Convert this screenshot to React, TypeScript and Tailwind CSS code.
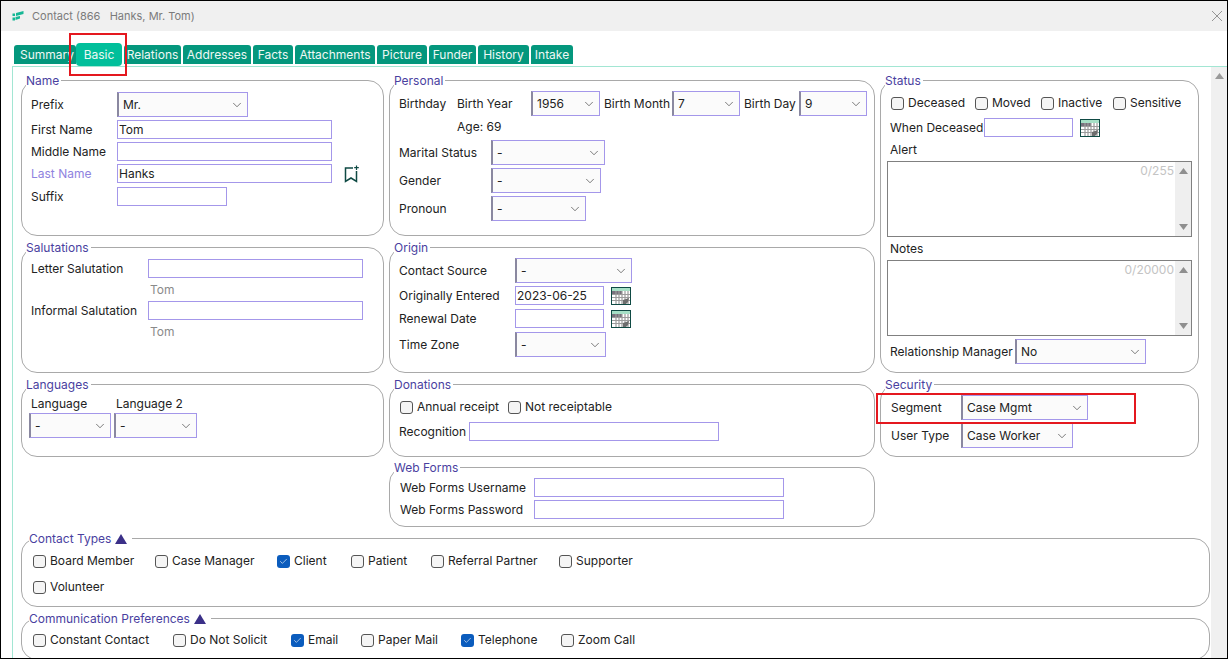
import { ReactNode } from "react";
import { Check, ChevronDown } from "lucide-react";

function Group({ title, arrow, className, children }: { title: string; arrow?: boolean; className?: string; children: ReactNode }) {
  return (
    <fieldset className={`min-w-0 rounded-[16px] border border-[#a9a9a9] ${className ?? ""}`}>
      <legend className={`flex h-4 items-center pr-[2px] pt-[1px] leading-4 text-[#4a3f9f] ${arrow ? "ml-[7px] pr-[5px]" : "ml-[4px]"}`}>
        {title}
        {arrow && (
          <svg width="12" height="10" viewBox="0 0 12 10" className="ml-[4px]">
            <path d="M6 0 L12 10 L0 10 Z" fill="#3b3088" />
          </svg>
        )}
      </legend>
      {children}
    </fieldset>
  );
}

function Select({ value, w }: { value: string; w: string }) {
  return (
    <div className={`flex h-[25px] shrink-0 items-center justify-between border border-l-2 border-[#a497ea] border-l-[#8a88a0] bg-[#fbfbfb] pl-[4px] pr-[3px] ${w}`}>
      <span>{value}</span>
      <ChevronDown size={14} strokeWidth={1.1} className="text-[#333]" />
    </div>
  );
}

function Input({ value, w }: { value?: string; w: string }) {
  return (
    <div className={`flex h-[19px] shrink-0 items-center border border-[#a497ea] bg-white pl-[1px] ${w}`}>
      {value}
    </div>
  );
}

function Box({ label, checked, w }: { label: string; checked?: boolean; w: string }) {
  return (
    <div className={`flex h-4 shrink-0 items-center gap-[4px] ${w}`}>
      {checked ? (
        <span className="flex h-[13px] w-[13px] items-center justify-center rounded-[3px] bg-[#0b5cbd]">
          <Check size={9} strokeWidth={1.6} className="text-white" />
        </span>
      ) : (
        <span className="h-[13px] w-[13px] rounded-[3px] border border-[#555] bg-[#f5f5f5]" />
      )}
      <span>{label}</span>
    </div>
  );
}

function CalendarIcon({ className }: { className?: string }) {
  return (
    <svg width="20" height="18" viewBox="0 0 20 18" className={`shrink-0 ${className ?? ""}`}>
      <rect x="0.5" y="0.5" width="19" height="17" fill="#fff" stroke="#0f4a44" />
      <rect x="1" y="1" width="18" height="3" fill="#a6e0c6" />
      <rect x="1" y="4" width="10" height="3" fill="#77717c" />
      <path d="M5 4V17M8 4V17M11 4V17M14 4V17M17 4V17M1 7.5H19M1 10.5H19M1 13.5H19" stroke="#9c9c9c" strokeWidth="1.2" />
      <path d="M12 17 L12 13 L18 11 L17 15 L15 17 Z" fill="#6e6e6e" />
    </svg>
  );
}

function Bookmark() {
  return (
    <svg width="16" height="18" viewBox="0 0 16 18" fill="none" stroke="#0f4a44" strokeWidth="1.5" className="ml-[12px] shrink-0">
      <path d="M9 3H1.5V16.5L7 13L12.5 16.5V6" />
      <path d="M12.5 0.5V5M10.2 2.7H14.8" strokeWidth="1.2" />
    </svg>
  );
}

function TextArea({ count }: { count: string }) {
  return (
    <div className="relative ml-[6px] mt-[3px] flex h-[76px] w-[305px] justify-end border border-[#808080] bg-white">
      <span className="absolute right-[17px] top-[1px] text-[#c4c4c4]">{count}</span>
      <div className="flex w-[16px] flex-col items-center justify-between bg-[#efefef] py-[6px]">
        <svg width="9" height="6" viewBox="0 0 9 6"><path d="M4.5 0L9 6H0Z" fill="#8f8f8f" /></svg>
        <svg width="9" height="6" viewBox="0 0 9 6"><path d="M4.5 6L9 0H0Z" fill="#8f8f8f" /></svg>
      </div>
    </div>
  );
}

const tabs = [
  { name: "Relations", w: "w-[57px]" },
  { name: "Addresses", w: "w-[68px]" },
  { name: "Facts", w: "w-[40px]" },
  { name: "Attachments", w: "w-[80px]" },
  { name: "Picture", w: "w-[50px]" },
  { name: "Funder", w: "w-[47px]" },
  { name: "History", w: "w-[51px]" },
  { name: "Intake", w: "w-[42px]" },
];

export default function App() {
  return (
    <div className="relative flex h-[659px] w-[1228px] flex-col overflow-hidden whitespace-nowrap border border-black bg-white font-['Inter',sans-serif] text-[12px] leading-4 text-[#222]">
      {/* title bar */}
      <div className="flex h-[30px] shrink-0 items-center justify-between bg-[#f0f0f0] pl-[11px] pr-[4px] text-[11px] text-[#7b7b7b]">
        <div className="flex items-center gap-[8px]">
          <svg width="12" height="10" viewBox="0 0 12 10" fill="#16b795">
            <path d="M4 2L11.5 0V3L4 5Z" />
            <path d="M0.5 2.5H3V5H0.5Z" />
            <path d="M3.5 6L8 5V7.5L3.5 9Z" />
            <path d="M0.5 6.5H3V9.5H0.5Z" />
          </svg>
          <span className="whitespace-pre">Contact (866   Hanks, Mr. Tom)</span>
        </div>
        <svg width="12" height="12" viewBox="0 0 12 12" stroke="#8a8a8a" strokeWidth="0.9">
          <path d="M1 1L11 11M11 1L1 11" />
        </svg>
      </div>

      {/* tabs */}
      <div className="mt-[12px] flex h-[23px] shrink-0 items-start pl-[13px] text-[#eef8f5]">
        <div className="mt-[2px] h-[19px] w-[62px] rounded-t-[3px] bg-[#04977d] pl-[6px] leading-[19px]">Summary</div>
        <div className="h-[23px] w-[46px] rounded-[4px] bg-[#01bf9b] text-center leading-[23px]">Basic</div>
        {tabs.map((t) => (
          <div key={t.name} className={`ml-[2px] mt-[2px] h-[19px] rounded-t-[3px] bg-[#04977d] text-center leading-[19px] ${t.w}`}>
            {t.name}
          </div>
        ))}
      </div>

      {/* panel */}
      <div className="ml-[11px] flex min-h-0 flex-1 border-l border-t border-[#a2e6d3]">
        <div className="flex w-[1197px] shrink-0 flex-col pl-[8px] pt-[5px]">
          <div className="grid grid-cols-[363px_486px_319px] grid-rows-[164px_134px_81px_67px] gap-x-[5px] gap-y-[3px]">
            <Group title="Name">
              <div className="flex flex-col pl-[9px] pt-[4px]">
                <div className="flex items-center">
                  <span className="w-[86px]">Prefix</span>
                  <Select value="Mr." w="w-[131px]" />
                </div>
                <div className="mt-[3px] flex items-center">
                  <span className="w-[86px]">First Name</span>
                  <Input value="Tom" w="w-[215px]" />
                </div>
                <div className="mt-[3px] flex items-center">
                  <span className="w-[86px]">Middle Name</span>
                  <Input w="w-[215px]" />
                </div>
                <div className="mt-[3px] flex items-center">
                  <span className="w-[86px] text-[#8f83e0]">Last Name</span>
                  <Input value="Hanks" w="w-[215px]" />
                  <Bookmark />
                </div>
                <div className="mt-[4px] flex items-center">
                  <span className="w-[86px]">Suffix</span>
                  <Input w="w-[110px]" />
                </div>
              </div>
            </Group>

            <Group title="Personal">
              <div className="flex flex-col pl-[9px] pt-[3px]">
                <div className="flex items-center">
                  <span className="w-[58px]">Birthday</span>
                  <span className="w-[74px]">Birth Year</span>
                  <Select value="1956" w="w-[69px]" />
                  <span className="ml-[4px] w-[68px]">Birth Month</span>
                  <Select value="7" w="w-[68px]" />
                  <span className="ml-[4px] w-[55px]">Birth Day</span>
                  <Select value="9" w="w-[68px]" />
                </div>
                <div className="ml-[58px] mt-[3px]">Age: 69</div>
                <div className="mt-[5px] flex items-center">
                  <span className="w-[92px]">Marital Status</span>
                  <Select value="-" w="w-[114px]" />
                </div>
                <div className="mt-[3px] flex items-center">
                  <span className="w-[92px]">Gender</span>
                  <Select value="-" w="w-[110px]" />
                </div>
                <div className="mt-[3px] flex items-center">
                  <span className="w-[92px]">Pronoun</span>
                  <Select value="-" w="w-[95px]" />
                </div>
              </div>
            </Group>

            <Group title="Status" className="row-span-2">
              <div className="flex flex-col pt-[7px]">
                <div className="flex pl-[10px]">
                  <Box label="Deceased" w="w-[84px]" />
                  <Box label="Moved" w="w-[66px]" />
                  <Box label="Inactive" w="w-[72px]" />
                  <Box label="Sensitive" w="w-[80px]" />
                </div>
                <div className="mt-[7px] flex items-center pl-[9px]">
                  <span className="w-[94px]">When Deceased</span>
                  <Input w="w-[89px]" />
                  <CalendarIcon className="ml-[7px]" />
                </div>
                <div className="mt-[5px] pl-[9px]">Alert</div>
                <TextArea count="0/255" />
                <div className="mt-[4px] pl-[9px]">Notes</div>
                <TextArea count="0/20000" />
                <div className="mt-[3px] flex items-center pl-[9px]">
                  <span className="w-[125px]">Relationship Manager</span>
                  <Select value="No" w="w-[131px]" />
                </div>
              </div>
            </Group>

            <Group title="Salutations">
              <div className="flex flex-col pl-[9px] pt-[4px]">
                <div className="flex items-center">
                  <span className="w-[117px]">Letter Salutation</span>
                  <Input w="w-[215px]" />
                </div>
                <div className="ml-[119px] mt-[4px] text-[#8a8a8a]">Tom</div>
                <div className="mt-[3px] flex items-center">
                  <span className="w-[117px]">Informal Salutation</span>
                  <Input w="w-[215px]" />
                </div>
                <div className="ml-[119px] mt-[4px] text-[#8a8a8a]">Tom</div>
              </div>
            </Group>

            <Group title="Origin">
              <div className="flex flex-col pl-[9px] pt-[3px]">
                <div className="flex items-center">
                  <span className="w-[116px]">Contact Source</span>
                  <Select value="-" w="w-[117px]" />
                </div>
                <div className="mt-[3px] flex items-center">
                  <span className="w-[116px]">Originally Entered</span>
                  <Input value="2023-06-25" w="w-[89px]" />
                  <CalendarIcon className="ml-[7px]" />
                </div>
                <div className="mt-[4px] flex items-center">
                  <span className="w-[116px]">Renewal Date</span>
                  <Input w="w-[89px]" />
                  <CalendarIcon className="ml-[7px]" />
                </div>
                <div className="mt-[4px] flex items-center">
                  <span className="w-[116px]">Time Zone</span>
                  <Select value="-" w="w-[91px]" />
                </div>
              </div>
            </Group>

            <Group title="Languages">
              <div className="grid grid-cols-[85px_85px] pl-[7px] pt-[4px]">
                <span className="pl-[2px]">Language</span>
                <span className="pl-[2px]">Language 2</span>
                <div className="mt-[1px]"><Select value="-" w="w-[82px]" /></div>
                <div className="mt-[1px]"><Select value="-" w="w-[83px]" /></div>
              </div>
            </Group>

            <Group title="Donations">
              <div className="flex flex-col pl-[9px] pt-[7px]">
                <div className="ml-[1px] flex">
                  <Box label="Annual receipt" w="w-[108px]" />
                  <Box label="Not receiptable" w="w-[120px]" />
                </div>
                <div className="mt-[7px] flex items-center">
                  <span className="w-[70px]">Recognition</span>
                  <Input w="w-[250px]" />
                </div>
              </div>
            </Group>

            <Group title="Security">
              <div className="flex flex-col pl-[10px] pt-[3px]">
                <div className="flex items-center">
                  <span className="w-[70px]">Segment</span>
                  <Select value="Case Mgmt" w="w-[127px]" />
                </div>
                <div className="mt-[3px] flex items-center">
                  <span className="w-[70px]">User Type</span>
                  <Select value="Case Worker" w="w-[112px]" />
                </div>
              </div>
            </Group>

            <Group title="Web Forms" className="col-start-2 -mt-[1px] h-[68px]">
              <div className="flex flex-col pl-[10px] pt-[3px]">
                <div className="flex items-center">
                  <span className="w-[134px]">Web Forms Username</span>
                  <Input w="w-[250px]" />
                </div>
                <div className="mt-[3px] flex items-center">
                  <span className="w-[134px]">Web Forms Password</span>
                  <Input w="w-[250px]" />
                </div>
              </div>
            </Group>
          </div>

          <Group title="Contact Types" arrow className="mt-[3px] h-[77px] shrink-0">
            <div className="flex flex-col pl-[11px] pt-[7px]">
              <div className="flex">
                <Box label="Board Member" w="w-[122px]" />
                <Box label="Case Manager" w="w-[122px]" />
                <Box label="Client" checked w="w-[74px]" />
                <Box label="Patient" w="w-[80px]" />
                <Box label="Referral Partner" w="w-[128px]" />
                <Box label="Supporter" w="w-[80px]" />
              </div>
              <div className="mt-[10px]">
                <Box label="Volunteer" w="w-[80px]" />
              </div>
            </div>
          </Group>

          <Group title="Communication Preferences" arrow className="mt-[3px] h-[50px] shrink-0">
            <div className="flex pl-[11px] pt-[6px]">
              <Box label="Constant Contact" w="w-[140px]" />
              <Box label="Do Not Solicit" w="w-[118px]" />
              <Box label="Email" checked w="w-[70px]" />
              <Box label="Paper Mail" w="w-[100px]" />
              <Box label="Telephone" checked w="w-[100px]" />
              <Box label="Zoom Call" w="w-[90px]" />
            </div>
          </Group>
        </div>

        {/* page scrollbar */}
        <div className="ml-[1px] flex w-[16px] shrink-0 justify-center bg-[#f0f0f0] pt-[6px]">
          <svg width="9" height="6" viewBox="0 0 9 6"><path d="M4.5 0L9 6H0Z" fill="#9a9a9a" /></svg>
        </div>
      </div>

      {/* red annotation boxes from the screenshot */}
      <div className="absolute left-[68px] top-[32px] h-[43px] w-[58px] border-2 border-[#e4181f]" />
      <div className="absolute left-[875px] top-[392px] h-[31px] w-[260px] border-2 border-[#e4181f]" />
    </div>
  );
}
